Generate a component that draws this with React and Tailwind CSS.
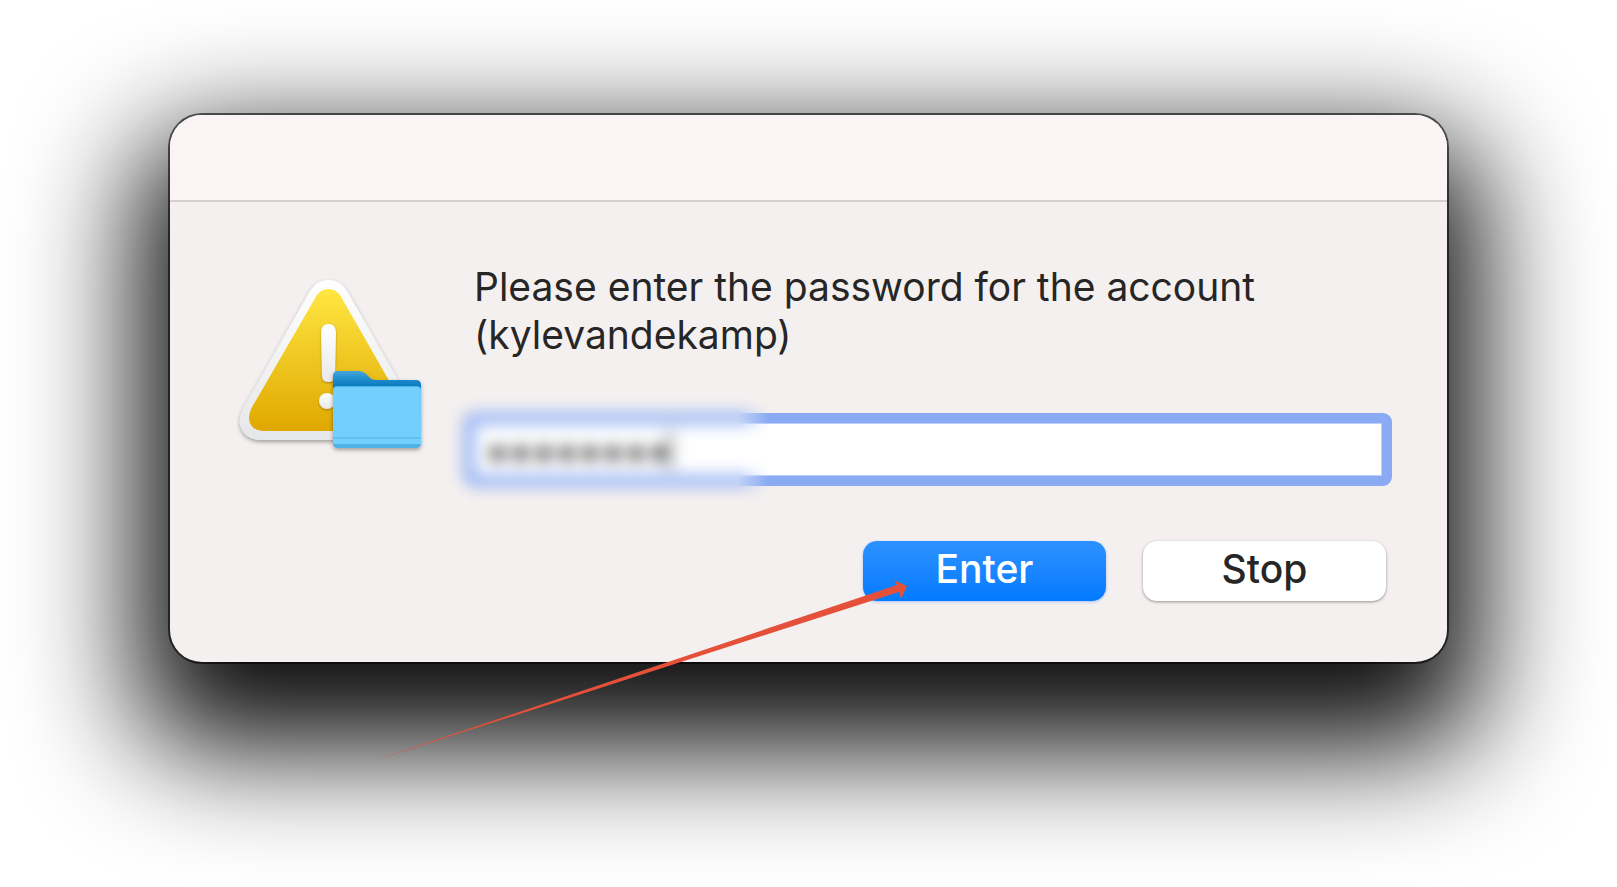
import React, { useState } from 'react';

function WarningIcon() {
  return (
    <svg viewBox="0 0 220 210" className="w-[220px] h-[210px] shrink-0" aria-hidden="true">
      <defs>
        <linearGradient id="rim" x1="0" y1="0" x2="0" y2="1">
          <stop offset="0" stopColor="#ffffff" />
          <stop offset="1" stopColor="#e6e7e9" />
        </linearGradient>
        <linearGradient id="yellow" x1="0" y1="0" x2="0" y2="1">
          <stop offset="0" stopColor="#ffe642" />
          <stop offset="1" stopColor="#dfa800" />
        </linearGradient>
        <linearGradient id="mark" x1="0" y1="0" x2="0" y2="1">
          <stop offset="0" stopColor="#ffffff" />
          <stop offset="1" stopColor="#e9e9e9" />
        </linearGradient>
        <linearGradient id="folderBack" x1="0" y1="0" x2="0" y2="1">
          <stop offset="0" stopColor="#45a5da" />
          <stop offset="0.3" stopColor="#1585c8" />
          <stop offset="0.5" stopColor="#0872b8" />
        </linearGradient>
        <filter id="softShadow" x="-20%" y="-20%" width="140%" height="140%">
          <feDropShadow dx="0" dy="2" stdDeviation="2" floodOpacity="0.35" />
        </filter>
        <filter id="markShadow" x="-60%" y="-20%" width="220%" height="150%">
          <feDropShadow dx="0" dy="1" stdDeviation="1" floodColor="#7a5600" floodOpacity="0.6" />
        </filter>
      </defs>
      <path
        d="M90 29 Q97 18 108.500 18 Q120 18 127 29 L194 146 Q203 162 194 172 Q189 178 178 178 H41 Q30 178 24 171 Q16 161 23 147 Z"
        fill="url(#rim)"
        filter="url(#softShadow)"
      />
      <path
        d="M97 33 Q101 27 108.500 27 Q116 27 120 33 L187 150 Q191 160 184 166 Q181 169 174 169 H43 Q35 169 31 163 Q27 157 31 147 Z"
        fill="url(#yellow)"
      />
      <g fill="url(#mark)" filter="url(#markShadow)">
        <path d="M108.500 62 Q116 62 116 71 L115 114 Q114 120 108.500 120 Q102 120 102 114 L101 71 Q101 62 108.500 62 Z" />
        <ellipse cx="107" cy="139" rx="8" ry="8" />
      </g>
      <g filter="url(#softShadow)">
        <path d="M113 114 Q113 109 118 109 H139 Q143 109 146 112 L150 116 Q152 118 156 118 H196 Q201 118 201 123 V145 H113 Z" fill="url(#folderBack)" />
        <path d="M113 128 Q113 124 117 124 H197 Q201 124 201 128 V181 Q201 186 196 186 H118 Q113 186 113 181 Z" fill="#4fb2e5" />
        <path d="M113 129 Q113 125 117 125 H197 Q201 125 201 129 V182 H113 Z" fill="#73cffd" />
        <path d="M113 175 H201 V177 H113 Z" fill="#5fc0f2" />
      </g>
    </svg>
  );
}

function Pointer() {
  return (
    <svg
      viewBox="0 0 534 182"
      className="absolute -left-[490px] top-[38px] w-[534px] h-[182px] max-w-none pointer-events-none"
      aria-hidden="true"
    >
      <path d="M0 182 L524 6 L521 1 L534 7 L528 20 L526 13 Z" fill="#e5503b" />
    </svg>
  );
}

function App() {
  const [password, setPassword] = useState('password');

  return (
    <div className="min-h-screen bg-white px-[170px] pt-[115px] pb-[225px] overflow-hidden font-['Inter',sans-serif] text-[#262626]">
      <main
        role="dialog"
        aria-labelledby="prompt"
        className="rounded-[32px] bg-[#f4f0ef] shadow-[0_0_0_2px_rgba(0,0,0,0.6),0_55px_118px_32px_rgba(0,0,0,0.95)]"
      >
        <div className="h-[87px] rounded-t-[32px] bg-[#faf5f4] border-b-2 border-[#d5d0cf]" />
        <form className="flex pl-[50px] pr-[55px] pt-[60px] pb-[61px]" onSubmit={(e) => e.preventDefault()}>
          <WarningIcon />
          <div className="flex-1 pl-6">
            <label id="prompt" htmlFor="password" className="block pt-px pl-[10px] text-[39px] leading-[48px]">
              Please enter the password for the account (kylevandekamp)
            </label>
            <div className="relative mt-[54px]">
              <input
                id="password"
                type="password"
                value={password}
                onChange={(e) => setPassword(e.target.value)}
                className="block w-full h-[73px] px-3 rounded-[9px] border-[10px] border-[#8aabf4] bg-white text-[41px] text-black outline-none shadow-[inset_0_0_0_1px_#b9cffb]"
              />
              <span className="absolute left-[205px] top-[17px] w-[2px] h-10 bg-black" />
              {/* hides the typed characters */}
              <div className="absolute -left-4 -top-4 w-[322px] h-[105px] backdrop-blur-[8px] mask-r-from-90%" />
            </div>
            <div className="flex justify-end gap-[37px] mt-[55px] pr-[6px]">
              <div className="relative">
                <button
                  type="submit"
                  className="block w-[243px] h-[60px] rounded-[14px] bg-linear-to-b from-[#2b91ff] to-[#007aff] text-[39px] leading-[56px] pb-1 font-medium text-white shadow-[0_1px_3px_rgba(0,80,255,0.3)]"
                >
                  Enter
                </button>
                <Pointer />
              </div>
              <button
                type="button"
                className="w-[243px] h-[60px] rounded-[14px] bg-white text-[39px] leading-[56px] pb-1 font-medium shadow-[0_1px_3px_rgba(0,0,0,0.4)]"
              >
                Stop
              </button>
            </div>
          </div>
        </form>
      </main>
    </div>
  );
}

export default App;
